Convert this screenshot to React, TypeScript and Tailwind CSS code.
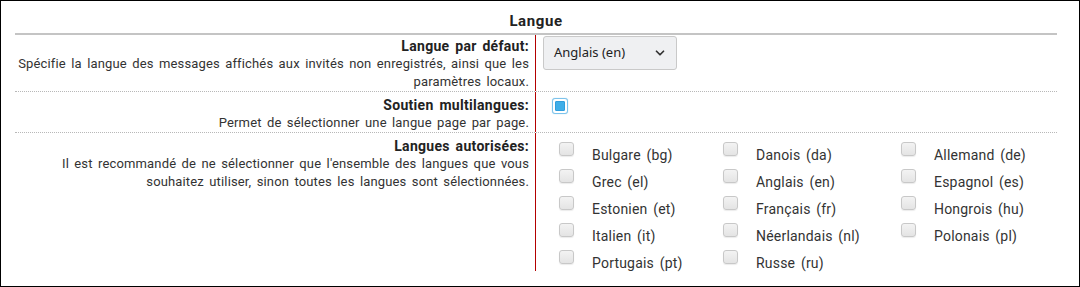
import { ChevronDown } from "lucide-react";

const LANGUAGES = [
  ["Bulgare (bg)", "Danois (da)", "Allemand (de)"],
  ["Grec (el)", "Anglais (en)", "Espagnol (es)"],
  ["Estonien (et)", "Français (fr)", "Hongrois (hu)"],
  ["Italien (it)", "Néerlandais (nl)", "Polonais (pl)"],
  ["Portugais (pt)", "Russe (ru)"],
];

function Box() {
  return (
    <span className="block w-[15px] h-[14px] rounded-[3px] border border-[#c8c8c8] bg-gradient-to-b from-[#f3f3f3] to-[#e4e4e4] shadow-[0_1px_1px_rgba(0,0,0,0.08)]" />
  );
}

function Label({ title, desc, pad }: { title: string; desc: string; pad: string }) {
  return (
    <div className={`w-[521px] shrink-0 border-r border-[#b30000] pl-[2px] pr-[6px] text-right [word-spacing:2px] ${pad}`}>
      <div className="text-[14px] leading-[18px] font-bold text-[#222] tracking-[0.3px]">{title}</div>
      <div className="text-[13px] leading-[18px] text-[#333] tracking-[0.15px]">{desc}</div>
    </div>
  );
}

export default function App() {
  return (
    <div className="w-[1080px] h-[287px] border border-black bg-white font-['Roboto',sans-serif] text-[#333]">
      <div className="mx-[14px] w-[1042px]">
        <div className="h-[34px] pt-[10px] text-center text-[15px] leading-[20px] font-bold text-[#222] tracking-[0.6px] border-b-2 border-[#c4c4c4]">
          Langue
        </div>

        <div className="flex border-b border-dotted border-[#b8b8b8]">
          <Label
            pad="pt-[2px]"
            title="Langue par défaut:"
            desc="Spécifie la langue des messages affichés aux invités non enregistrés, ainsi que les paramètres locaux."
          />
          <div className="pl-[7px] pt-[1px]">
            <div className="flex items-center justify-between w-[134px] h-[34px] pl-[10px] pr-[9px] rounded-[3px] border border-[#c9c9c9] bg-[#eff0f2] font-['Noto_Sans',sans-serif] text-[13px] text-[#222]">
              <span>Anglais (en)</span>
              <ChevronDown className="w-[14px] h-[14px] text-[#333]" strokeWidth={3} />
            </div>
          </div>
        </div>

        <div className="flex border-b border-dotted border-[#b8b8b8]">
          <Label pad="pt-[4px]" title="Soutien multilangues:" desc="Permet de sélectionner une langue page par page." />
          <div className="pl-[16px] pt-[6px]">
            <span className="block w-[16px] h-[16px] rounded-[3px] border border-[#7cc3ec] bg-white p-[2px] shadow-[0_0_1px_#8fc8ea]">
              <span className="block w-full h-full rounded-[1px] bg-[#3daee9] border border-[#2f9ddc]" />
            </span>
          </div>
        </div>

        <div className="flex">
          <Label
            pad="pt-[4px]"
            title="Langues autorisées:"
            desc="Il est recommandé de ne sélectionner que l'ensemble des langues que vous souhaitez utiliser, sinon toutes les langues sont sélectionnées."
          />
          <div className="pl-[23px] pt-[3px] grid grid-cols-[164px_178px_150px] auto-rows-[27px]">
            {LANGUAGES.flat().map((lang) => (
              <div key={lang} className="flex items-start gap-[18px]">
                <span className="mt-[6px]">
                  <Box />
                </span>
                <span className="pt-[9px] text-[14px] leading-[20px] text-[#333] tracking-[0.2px] [word-spacing:2px]">{lang}</span>
              </div>
            ))}
          </div>
        </div>
      </div>
    </div>
  );
}
